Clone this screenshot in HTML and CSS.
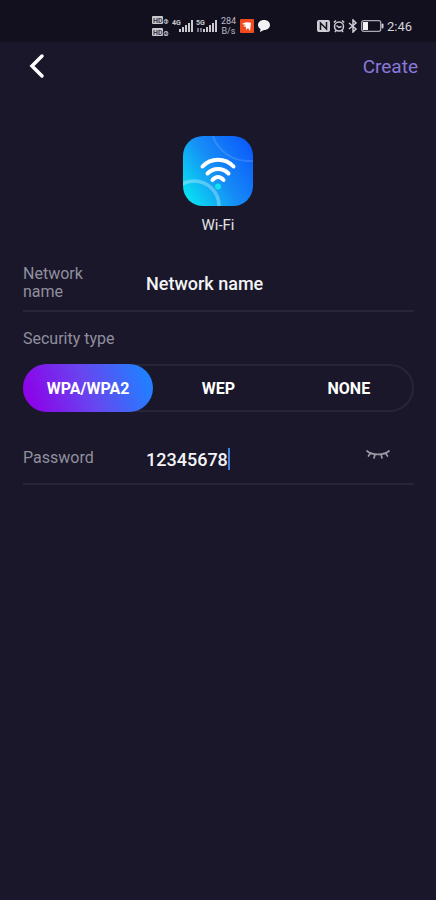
FILE: index.html
```html
<!DOCTYPE html>
<html lang="en">
<head>
<meta charset="utf-8">
<meta name="viewport" content="width=device-width, initial-scale=1">
<title>Create Wi-Fi</title>
<link rel="stylesheet" href="styles.css">
</head>
<body>
<div class="status">
  <div class="status-left">
    <svg width="17" height="22" viewBox="0 0 17 22" aria-hidden="true">
      <g fill="#c9c8cf"><rect y="1" width="11" height="8" rx="1"/><rect y="13" width="11" height="8" rx="1"/></g>
      <g fill="#3a3848" font-family="Roboto, sans-serif" font-size="7" font-weight="700"><text x="1" y="8">HD</text><text x="1" y="20">HD</text></g>
      <g fill="#c9c8cf" font-family="Roboto, sans-serif" font-size="7" font-weight="700"><text x="12" y="9">1</text><text x="12" y="21">2</text></g>
      <g fill="none" stroke="#aaa9b3"><circle cx="14" cy="6.500" r="2"/><circle cx="14" cy="18.500" r="2"/></g>
    </svg>
    <svg width="21" height="16" viewBox="0 0 21 16" aria-hidden="true">
      <text x="0" y="7" fill="#c9c8cf" font-family="Roboto, sans-serif" font-size="7" font-weight="700">4G</text>
      <path fill="#c9c8cf" d="M7 11h2v3H7zM10 9h2v5h-2zM13 7h2v7h-2zM16 5h2v9h-2zM19 2h2v12h-2z"/>
    </svg>
    <svg width="21" height="16" viewBox="0 0 21 16" aria-hidden="true">
      <text x="0" y="7" fill="#c9c8cf" font-family="Roboto, sans-serif" font-size="7" font-weight="700">5G</text>
      <path fill="#77758a" d="M1 10h2v4H1zM4 10h2v4H4z"/>
      <path fill="#c9c8cf" d="M7 11h2v3H7zM10 9h2v5h-2zM13 7h2v7h-2zM16 5h2v9h-2zM19 2h2v12h-2z"/>
    </svg>
    <div class="speed"><span>284</span><span>B/s</span></div>
    <svg width="14" height="14" viewBox="0 0 14 14" aria-hidden="true">
      <rect width="14" height="14" rx="1" fill="#ef4b1f"/>
      <path d="M2 5c3-2 6-2 9-1l-1 8-2-3-2 2V8L3 7l3-1z" fill="#fff"/>
    </svg>
    <svg width="14" height="14" viewBox="0 0 14 14" aria-hidden="true">
      <path d="M7 1c3.600 0 6 2.200 6 5s-2.400 5-6 5l-4 2 .5-3C2 9 1 7.700 1 6c0-2.800 2.400-5 6-5z" fill="#f2f2f4"/>
    </svg>
  </div>
  <div class="status-right">
    <svg width="13" height="14" viewBox="0 0 13 14" aria-hidden="true">
      <rect y="1" width="13" height="12" rx="2" fill="#cfced5"/>
      <path d="M3.500 11V4l6 6V3" fill="none" stroke="#151322" stroke-width="1.500"/>
    </svg>
    <svg width="12" height="14" viewBox="0 0 12 14" fill="none" stroke="#cfced5" stroke-width="1.500" aria-hidden="true">
      <circle cx="6" cy="7.500" r="4.500"/><path d="M.8 3.500 3 1.500M11.200 3.500 9 1.500M3.500 6.500 6 8.500l2.500-1M3 11.500l-1 1.500M9 11.500l1 1.500"/>
    </svg>
    <svg width="10" height="14" viewBox="0 0 10 14" fill="none" stroke="#cfced5" stroke-width="1.500" aria-hidden="true">
      <path d="m1 4 7 6-3 3V1l3 3-7 6"/>
    </svg>
    <svg width="23" height="12" viewBox="0 0 23 12" aria-hidden="true">
      <rect x=".7" y=".7" width="19" height="10.600" rx="2" fill="none" stroke="#aaa9b3" stroke-width="1.300"/>
      <rect x="2" y="2" width="5" height="8" fill="#f2f2f4"/><rect x="20.500" y="3.500" width="2" height="5" rx="1" fill="#cfced5"/>
    </svg>
    <time>2:46</time>
  </div>
</div>
<header class="bar">
  <button class="back" type="button" aria-label="Back">
    <svg width="16" height="26" viewBox="0 0 16 26" fill="none" stroke="#fff" stroke-width="3.500" stroke-linecap="round" aria-hidden="true"><path d="M13 3 3 13l10 10"/></svg>
  </button>
  <button class="create" type="submit" form="wifi-form">Create</button>
</header>
<main>
  <div class="hero">
    <svg class="logo" viewBox="0 0 70 70" aria-hidden="true">
      <defs>
        <linearGradient id="tile" x1="0" y1=".85" x2="1" y2=".2"><stop offset="0" stop-color="#08e4f1"/><stop offset=".5" stop-color="#168cf6"/><stop offset="1" stop-color="#0b5cfa"/></linearGradient>
        <clipPath id="round"><rect width="70" height="70" rx="20"/></clipPath>
      </defs>
      <g clip-path="url(#round)">
        <rect width="70" height="70" fill="url(#tile)"/>
        <g fill="none" stroke="#fff"><circle cx="11" cy="70" r="25" stroke-width="3.500" stroke-opacity=".3"/><circle cx="65" cy="-12" r="37" stroke-width="2" stroke-opacity=".14"/></g>
      </g>
      <g fill="none" stroke="#fff" stroke-width="4" stroke-linecap="round"><path d="M19.500 30.500C28 21.500 42 21.500 50.500 30.500"/><path d="M24.500 37.500c6-6 15-6 21 0"/><path d="M29.500 44c3.500-4 7.500-4 11 0"/></g>
      <circle cx="35" cy="50.500" r="3" fill="#12e2ee"/>
    </svg>
    <h1>Wi-Fi</h1>
  </div>
  <form id="wifi-form">
    <div class="row row-name">
      <label for="name">Network name</label>
      <input class="value" id="name" type="text" value="Network name">
    </div>
    <fieldset>
      <legend>Security type</legend>
      <div class="segments">
        <label><input type="radio" name="security" checked><span>WPA/WPA2</span></label>
        <label><input type="radio" name="security"><span>WEP</span></label>
        <label><input type="radio" name="security"><span>NONE</span></label>
      </div>
    </fieldset>
    <div class="row row-password">
      <label for="password">Password</label>
      <div class="entry"><input class="value fit" id="password" type="text" value="12345678" size="8"><i class="caret"></i></div>
      <button class="eye" type="button" aria-label="Hide password">
        <svg width="24" height="12" viewBox="0 0 24 12" fill="none" stroke="#9a98a5" stroke-width="1.700" stroke-linecap="round" aria-hidden="true"><path d="M1 2c5 4.500 17 4.500 22 0M4.500 4 2.500 7M9 5.500 8 9M15 5.500 16 9M19.500 4l2 3"/></svg>
      </button>
    </div>
  </form>
</main>
</body>
</html>
```
FILE: styles.css
```css
* { box-sizing: border-box; }

body {
  margin: 0;
  min-height: 100vh;
  background: #191729;
  color: #fff;
  font-family: Roboto, sans-serif;
}

button, input {
  margin: 0;
  padding: 0;
  border: 0;
  background: none;
  color: inherit;
  font-family: inherit;
}

svg { display: block; flex: none; }

.status {
  display: flex;
  justify-content: space-between;
  height: 42px;
  padding: 10px 24px 0 152px;
  background: #12101f;
}

.status-left, .status-right {
  display: flex;
  align-items: center;
  height: 32px;
  gap: 3px;
}

.speed {
  display: flex;
  flex-direction: column;
  width: 17px;
  color: #bbbac3;
  font-size: 9px;
  line-height: 10px;
  text-align: center;
}

time { color: #d5d4da; font-size: 13px; }

.bar {
  display: flex;
  align-items: center;
  justify-content: space-between;
  height: 48px;
  padding: 0 18px 0 23px;
}

.back {
  display: grid;
  place-items: center;
  width: 28px;
  height: 40px;
}

.create { color: #8a78dc; font-size: 19px; }

.hero {
  display: flex;
  flex-direction: column;
  align-items: center;
  gap: 9px;
  padding-top: 46px;
}

.logo { width: 70px; height: 70px; }

h1 {
  margin: 0;
  color: #e2e1e8;
  font-size: 15px;
  font-weight: 400;
  line-height: 20px;
}

form { padding: 0 22px 0 23px; }

.row {
  display: flex;
  align-items: center;
  border-bottom: 2px solid #272538;
}

.row > label {
  flex: none;
  width: 80px;
  margin-right: 43px;
}

.row > label, legend {
  color: #918f9e;
  font-size: 16px;
  line-height: 18px;
}

.row-name { height: 56px; margin-top: 21px; }

.row-password { height: 56px; margin-top: 17px; padding-top: 3px; }

.value {
  flex: 1;
  min-width: 0;
  height: 28px;
  color: #f4f4f7;
  font-size: 18px;
  font-weight: 500;
  outline: 0;
}

.entry { display: flex; flex: 1; align-items: center; padding-top: 3px; }

.fit { flex: none; field-sizing: content; }

.caret { width: 2px; height: 22px; background: #3f82e8; }

.eye { padding: 0 24px 6px 0; }

fieldset { margin: 0; padding: 18px 0 0; border: 0; min-width: 0; }

legend { float: left; padding: 0; }

.segments {
  display: flex;
  clear: both;
  position: relative;
  height: 64px;
  padding-top: 16px;
}

.segments::before {
  content: "";
  position: absolute;
  inset: 16px 0 0;
  border: 2px solid #272538;
  border-radius: 24px;
}

.segments label { position: relative; flex: 1; }

.segments input {
  position: absolute;
  inset: 0;
  width: 100%;
  height: 100%;
  appearance: none;
  border-radius: 24px;
}

.segments input:checked { background: linear-gradient(70deg, #8b05e8 8%, #6746f0 50%, #227fff 92%); }

.segments span {
  position: relative;
  display: grid;
  place-items: center;
  height: 100%;
  font-size: 16px;
  font-weight: 700;
  pointer-events: none;
}
```
